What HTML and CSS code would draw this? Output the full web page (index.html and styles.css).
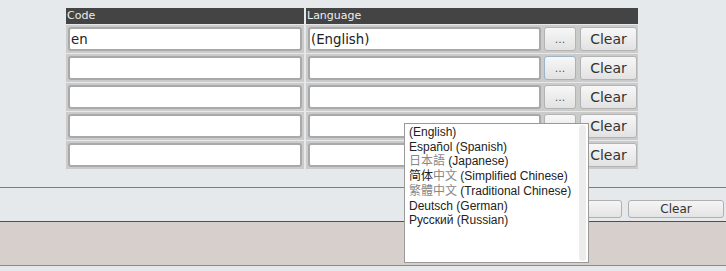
FILE: index.html
```html
<!doctype html>
<html>
	<head>
		<meta charset="UTF-8">
		<title>Languages</title>
		<link rel="stylesheet" href="styles.css">
	</head>
<body>
	<div id="wrap">
		<div class="top">
			<div class="grid">
				<div class="head">Code</div>
				<div class="head">Language</div>

				<div class="cell"><div class="inp">en</div></div>
				<div class="cell lang"><div class="inp">(English)</div><div class="btn dots">...</div><div class="btn clear">Clear</div></div>

				<div class="cell"><div class="inp"></div></div>
				<div class="cell lang"><div class="inp"></div><div class="btn dots focus">...</div><div class="btn clear">Clear</div></div>

				<div class="cell"><div class="inp"></div></div>
				<div class="cell lang"><div class="inp"></div><div class="btn dots">...</div><div class="btn clear">Clear</div></div>

				<div class="cell"><div class="inp"></div></div>
				<div class="cell lang"><div class="inp"></div><div class="btn dots">...</div><div class="btn clear">Clear</div></div>

				<div class="cell"><div class="inp"></div></div>
				<div class="cell lang"><div class="inp"></div><div class="btn dots">...</div><div class="btn clear">Clear</div></div>
			</div>
		</div>
		<div class="toolbar">
			<div class="tbtn"></div>
			<div class="tbtn">Clear</div>
		</div>
		<div class="status"></div>

		<!-- 下拉列表 -->
		<div class="popup">
			<ul class="list">
				<li>(English)</li>
				<li>Español (Spanish)</li>
				<li><span class="g">日本語</span> (Japanese)</li>
				<li>简体<span class="g">中文</span> (Simplified Chinese)</li>
				<li><span class="g">繁體中文</span> (Traditional Chinese)</li>
				<li>Deutsch (German)</li>
				<li>Русский (Russian)</li>
			</ul>
			<div class="track"></div>
		</div>
	</div>
</body>
</html>
```

FILE: styles.css
```css
*{
	margin:0;
	padding:0;
	box-sizing:border-box;
}
ul{
	list-style:none;
}
body{
	background-color:#e5e9eb;
	font-family:"DejaVu Sans", sans-serif;
}
#wrap{
	position:relative;
	width:726px;
	height:271px;
}
#wrap .top{
	height:188px;
	padding-top:8px;
	border-bottom:1px solid #7a7c7d;
}
#wrap .grid{
	display:grid;
	grid-template-columns:238px 332px;
	column-gap:2px;
	row-gap:1px;
	width:572px;
	margin-left:66px;
}
#wrap .head{
	height:16px;
	line-height:16px;
	padding-left:1px;
	font-size:11px;
	color:#eee;
	background-color:#444;
}
#wrap .cell{
	display:flex;
	height:28px;
	padding:2px;
	background-color:#cbcbcb;
}
#wrap .cell.lang{
	padding-right:1px;
}
#wrap .inp{
	width:234px;
	height:24px;
	padding-left:1px;
	line-height:21px;
	font-size:13.3px;
	color:#222;
	background-color:#fff;
	border:2px solid #a9a9a9;
	border-radius:3px;
}
#wrap .lang .inp{
	width:233px;
	margin-right:3px;
}
#wrap .btn{
	height:24px;
	line-height:22px;
	text-align:center;
	color:#333;
	background:linear-gradient(#f7f7f7,#e2e2e2);
	border:1px solid #b3b3b3;
	border-radius:3px;
}
#wrap .btn.dots{
	width:32px;
	margin-right:4px;
	padding-top:1px;
	font-size:11px;
	color:#555;
}
#wrap .btn.focus{
	border-color:#9bb4c8;
}
#wrap .btn.clear{
	width:57px;
	font-size:14px;
}
#wrap .toolbar{
	display:flex;
	justify-content:flex-end;
	gap:6px;
	height:34px;
	padding:12px 2px 0 0;
	border-bottom:1px solid #2b5b7c;
}
#wrap .tbtn{
	width:96px;
	height:18px;
	line-height:16px;
	text-align:center;
	font-size:12px;
	color:#333;
	background:linear-gradient(#f5f5f5,#e4e4e4);
	border:1px solid #b0b0b0;
	border-radius:3px;
}
#wrap .status{
	height:44px;
	background-color:#d6cfcc;
	border-bottom:1px solid #8a8a8a;
}
#wrap .popup{
	position:absolute;
	left:404px;
	top:123px;
	width:185px;
	height:140px;
	background-color:#fff;
	border:1px solid #999;
}
#wrap .popup .list{
	padding:1px 0 0 4px;
	font-family:"Liberation Sans", "Noto Sans CJK SC", sans-serif;
	font-size:12px;
	line-height:14.7px;
	color:#222;
}
#wrap .popup .g{
	color:#888;
}
#wrap .popup .track{
	position:absolute;
	right:2px;
	top:1px;
	bottom:1px;
	width:7px;
	background-color:#ececec;
	border-radius:4px;
}
```
